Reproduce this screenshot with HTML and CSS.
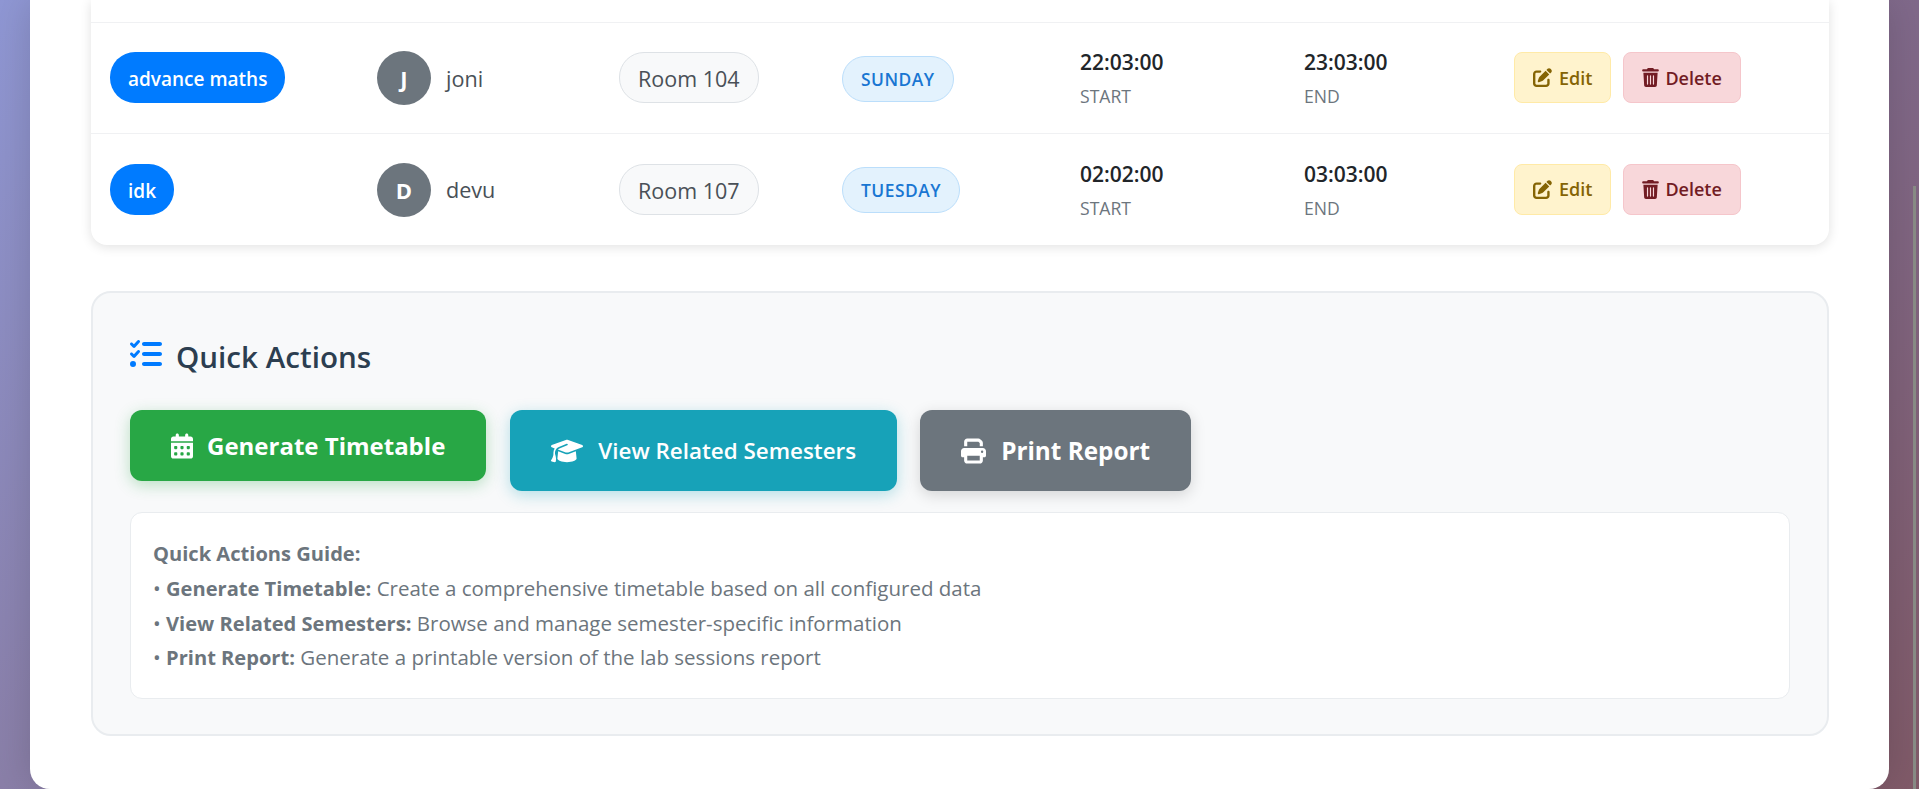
FILE: index.html
```html
<!DOCTYPE html>
<html lang="en">
<head>
    <meta charset="UTF-8">
    <title>Lab Sessions</title>
    <link rel="stylesheet" href="styles.css">
</head>
<body>
    <div class="scroll-thumb"></div>
    <div class="container">
        <div class="table-card">
            <div class="row row-cut"></div>
            <div class="row">
                <div class="cell col-subject"><span class="subject">advance maths</span></div>
                <div class="cell col-teacher"><span class="avatar">J</span><span class="teacher">joni</span></div>
                <div class="cell col-room"><span class="room">Room 104</span></div>
                <div class="cell col-day"><span class="day">SUNDAY</span></div>
                <div class="cell col-time"><div class="time">22:03:00</div><div class="time-label">START</div></div>
                <div class="cell col-time"><div class="time">23:03:00</div><div class="time-label">END</div></div>
                <div class="cell col-actions">
                    <a class="btn-small btn-edit"><svg class="ico-edit" viewBox="0 0 512 512"><path d="M471.6 21.7c-21.9-21.9-57.3-21.9-79.2 0L362.3 51.7l97.9 97.9 30.1-30.1c21.9-21.9 21.9-57.3 0-79.2L471.6 21.7zm-299.2 220c-6.1 6.1-10.8 13.6-13.5 21.9l-29.6 88.8c-2.9 8.6-.6 18.1 5.8 24.6s15.9 8.7 24.6 5.8l88.8-29.6c8.2-2.7 15.7-7.4 21.9-13.5L437.7 172.3 339.7 74.3 172.4 241.7zM96 64C43 64 0 107 0 160V416c0 53 43 96 96 96H352c53 0 96-43 96-96V320c0-17.7-14.3-32-32-32s-32 14.3-32 32v96c0 17.7-14.3 32-32 32H96c-17.7 0-32-14.3-32-32V160c0-17.7 14.3-32 32-32h96c17.7 0 32-14.3 32-32s-14.3-32-32-32H96z"/></svg>Edit</a>
                    <a class="btn-small btn-delete"><svg class="ico-trash" viewBox="0 0 448 512"><path d="M135.2 17.7L128 32H32C14.3 32 0 46.3 0 64S14.3 96 32 96H416c17.7 0 32-14.3 32-32s-14.3-32-32-32H320l-7.2-14.3C307.4 6.8 296.3 0 284.2 0H163.8c-12.1 0-23.2 6.8-28.6 17.7zM416 128H32L53.2 467c1.6 25.3 22.6 45 47.9 45H346.9c25.3 0 46.3-19.7 47.9-45L416 128zM144 192c8.8 0 16 7.2 16 16V432c0 8.8-7.2 16-16 16s-16-7.2-16-16V208c0-8.8 7.2-16 16-16zm80 0c8.8 0 16 7.2 16 16V432c0 8.8-7.2 16-16 16s-16-7.2-16-16V208c0-8.8 7.2-16 16-16zm80 0c8.8 0 16 7.2 16 16V432c0 8.8-7.2 16-16 16s-16-7.2-16-16V208c0-8.8 7.2-16 16-16z"/></svg>Delete</a>
                </div>
            </div>
            <div class="row">
                <div class="cell col-subject"><span class="subject">idk</span></div>
                <div class="cell col-teacher"><span class="avatar">D</span><span class="teacher">devu</span></div>
                <div class="cell col-room"><span class="room">Room 107</span></div>
                <div class="cell col-day"><span class="day">TUESDAY</span></div>
                <div class="cell col-time"><div class="time">02:02:00</div><div class="time-label">START</div></div>
                <div class="cell col-time"><div class="time">03:03:00</div><div class="time-label">END</div></div>
                <div class="cell col-actions">
                    <a class="btn-small btn-edit"><svg class="ico-edit" viewBox="0 0 512 512"><path d="M471.6 21.7c-21.9-21.9-57.3-21.9-79.2 0L362.3 51.7l97.9 97.9 30.1-30.1c21.9-21.9 21.9-57.3 0-79.2L471.6 21.7zm-299.2 220c-6.1 6.1-10.8 13.6-13.5 21.9l-29.6 88.8c-2.9 8.6-.6 18.1 5.8 24.6s15.9 8.7 24.6 5.8l88.8-29.6c8.2-2.7 15.7-7.4 21.9-13.5L437.7 172.3 339.7 74.3 172.4 241.7zM96 64C43 64 0 107 0 160V416c0 53 43 96 96 96H352c53 0 96-43 96-96V320c0-17.7-14.3-32-32-32s-32 14.3-32 32v96c0 17.7-14.3 32-32 32H96c-17.7 0-32-14.3-32-32V160c0-17.7 14.3-32 32-32h96c17.7 0 32-14.3 32-32s-14.3-32-32-32H96z"/></svg>Edit</a>
                    <a class="btn-small btn-delete"><svg class="ico-trash" viewBox="0 0 448 512"><path d="M135.2 17.7L128 32H32C14.3 32 0 46.3 0 64S14.3 96 32 96H416c17.7 0 32-14.3 32-32s-14.3-32-32-32H320l-7.2-14.3C307.4 6.8 296.3 0 284.2 0H163.8c-12.1 0-23.2 6.8-28.6 17.7zM416 128H32L53.2 467c1.6 25.3 22.6 45 47.9 45H346.9c25.3 0 46.3-19.7 47.9-45L416 128zM144 192c8.8 0 16 7.2 16 16V432c0 8.8-7.2 16-16 16s-16-7.2-16-16V208c0-8.8 7.2-16 16-16zm80 0c8.8 0 16 7.2 16 16V432c0 8.8-7.2 16-16 16s-16-7.2-16-16V208c0-8.8 7.2-16 16-16zm80 0c8.8 0 16 7.2 16 16V432c0 8.8-7.2 16-16 16s-16-7.2-16-16V208c0-8.8 7.2-16 16-16z"/></svg>Delete</a>
                </div>
            </div>
        </div>

        <div class="quick-panel">
            <h3 class="quick-title">
                <svg class="ico-tasks" viewBox="0 0 512 512"><path d="M152.1 38.2c9.9 8.9 10.7 24 1.8 33.9l-72 80c-4.4 4.9-10.6 7.8-17.2 7.9s-12.9-2.4-17.6-7L7 113C-2.3 103.6-2.3 88.4 7 79s24.6-9.4 33.9 0l22.1 22.1 55.1-61.2c8.9-9.9 24-10.7 33.9-1.8zm0 160c9.9 8.9 10.7 24 1.8 33.9l-72 80c-4.4 4.9-10.6 7.8-17.2 7.9s-12.9-2.4-17.6-7L7 273c-9.4-9.4-9.4-24.6 0-33.900s24.6-9.4 33.900 0l22.100 22.100 55.100-61.200c8.900-9.900 24-10.700 33.900-1.800zM192 96c0-17.700 14.300-32 32-32H480c17.700 0 32 14.300 32 32s-14.300 32-32 32H224c-17.700 0-32-14.300-32-32zm0 160c0-17.700 14.300-32 32-32H480c17.700 0 32 14.300 32 32s-14.300 32-32 32H224c-17.700 0-32-14.300-32-32zm0 160c0-17.700 14.300-32 32-32H480c17.700 0 32 14.300 32 32s-14.300 32-32 32H224c-17.700 0-32-14.300-32-32zM48 368a48 48 0 1 1 0 96 48 48 0 1 1 0-96z"/></svg>
                Quick Actions
            </h3>
            <div class="quick-buttons">
                <a class="btn-big btn-green"><svg class="ico-cal" viewBox="0 0 448 512"><path d="M128 0c17.7 0 32 14.3 32 32V64H288V32c0-17.7 14.3-32 32-32s32 14.3 32 32V64h48c26.5 0 48 21.500 48 48v48H0V112C0 85.500 21.500 64 48 64H96V32c0-17.7 14.3-32 32-32zM0 192H448V464c0 26.500-21.500 48-48 48H48c-26.500 0-48-21.500-48-48V192zm64 80v32c0 8.800 7.200 16 16 16h32c8.800 0 16-7.200 16-16V272c0-8.800-7.200-16-16-16H80c-8.800 0-16 7.200-16 16zm128 0v32c0 8.800 7.200 16 16 16h32c8.800 0 16-7.200 16-16V272c0-8.800-7.200-16-16-16H208c-8.800 0-16 7.200-16 16zm144-16c-8.800 0-16 7.200-16 16v32c0 8.800 7.200 16 16 16h32c8.800 0 16-7.200 16-16V272c0-8.800-7.200-16-16-16H336zM64 400v32c0 8.800 7.200 16 16 16h32c8.800 0 16-7.200 16-16V400c0-8.800-7.200-16-16-16H80c-8.800 0-16 7.200-16 16zm144-16c-8.800 0-16 7.200-16 16v32c0 8.800 7.200 16 16 16h32c8.800 0 16-7.200 16-16V400c0-8.800-7.200-16-16-16H208zm112 16v32c0 8.800 7.200 16 16 16h32c8.800 0 16-7.200 16-16V400c0-8.800-7.200-16-16-16H336c-8.800 0-16 7.200-16 16z"/></svg>Generate Timetable</a>
                <a class="btn-big btn-teal"><svg class="ico-grad" viewBox="0 0 640 512"><path d="M320 32c-8.100 0-16.100 1.400-23.700 4.100L15.800 137.400C6.300 140.900 0 149.900 0 160s6.300 19.100 15.800 22.600l57.900 20.900C57.300 229.300 48 259.800 48 291.900V320c0 28.400-10.800 57.700-22.300 80.800c-6.500 13-13.900 25.800-22.500 37.600C0 442.700-.9 448.300 .9 453.400s6 8.900 11.200 10.200l64 16c4.200 1.100 8.700 .3 12.400-2s6.300-6.100 7.100-10.400c8.600-42.800 4.300-81.200-2.100-108.700C90.300 344.300 86 329.800 80 316.500V291.900c0-30.200 10.200-58.700 27.900-81.500c12.900-15.500 29.600-28 49.200-35.700l157-61.700c8.200-3.200 17.500 .8 20.700 9s-.8 17.500-9 20.700l-157 61.700c-12.400 4.900-23.300 12.400-32.200 21.600l159.600 57.600c7.600 2.700 15.600 4.100 23.700 4.100s16.100-1.400 23.700-4.100L624.200 182.600c9.500-3.400 15.800-12.500 15.800-22.600s-6.300-19.100-15.800-22.600L343.700 36.100C336.100 33.400 328.100 32 320 32zM128 408c0 35.300 86 72 192 72s192-36.700 192-72L496.700 262.600 354.500 314c-11.100 4-22.800 6-34.500 6s-23.500-2-34.500-6L143.300 262.600 128 408z"/></svg>View Related Semesters</a>
                <a class="btn-big btn-gray"><svg class="ico-print" viewBox="0 0 512 512"><path d="M128 0C92.700 0 64 28.700 64 64v96h64V64H354.700L384 93.300V160h64V93.300c0-17-6.700-33.300-18.700-45.300L400 18.700C388 6.700 371.700 0 354.700 0H128zM384 352v32 64H128V384 368 352H384zm64 32h32c17.700 0 32-14.300 32-32V256c0-35.300-28.700-64-64-64H64c-35.300 0-64 28.700-64 64v96c0 17.700 14.300 32 32 32H64v64c0 35.300 28.700 64 64 64H384c35.300 0 64-28.700 64-64V384zM432 248a24 24 0 1 1 0 48 24 24 0 1 1 0-48z"/></svg>Print Report</a>
            </div>
            <div class="guide">
                <strong>Quick Actions Guide:</strong><br>
                • <strong>Generate Timetable:</strong> Create a comprehensive timetable based on all configured data<br>
                • <strong>View Related Semesters:</strong> Browse and manage semester-specific information<br>
                • <strong>Print Report:</strong> Generate a printable version of the lab sessions report
            </div>
        </div>
    </div>
</body>
</html>
```

FILE: styles.css
```css
body {
    margin: 0;
    height: 789px;
    overflow: hidden;
    font-family: "Open Sans", "Noto Sans", sans-serif;
    background: linear-gradient(135deg, #8f97d4 0%, #8a7fa8 29%, #80698a 71%, #805a68 100%);
}
.scroll-thumb {
    position: absolute;
    top: 186px;
    right: 3px;
    width: 3px;
    height: 603px;
    background-color: #878a84;
}
.container {
    margin: 0 30px;
    height: 789px;
    box-sizing: border-box;
    background-color: #fff;
    border-radius: 0 0 20px 20px;
    box-shadow: 0 0 40px rgba(0, 0, 0, 0.15);
    padding: 0 60px 0 61px;
}
.table-card {
    height: 245px;
    box-sizing: border-box;
    border-radius: 0 0 16px 16px;
    background-color: #fff;
    box-shadow: 0 2px 12px rgba(0, 0, 0, 0.12);
}
.row {
    display: flex;
    align-items: center;
    height: 111px;
    box-sizing: border-box;
    border-bottom: 1px solid #f0f1f3;
    padding-left: 19px;
}
.row:last-child {
    border-bottom: none;
}
.row-cut {
    height: 23px;
}
.cell {
    display: flex;
    align-items: center;
    flex: none;
}
.col-subject { width: 267px; }
.col-teacher { width: 242px; }
.col-room { width: 223px; }
.col-day { width: 238px; }
.col-time { width: 224px; display: block; }
.col-time + .col-time { width: 210px; }
.col-actions { gap: 12px; }

.subject {
    background-color: #007bff;
    color: #fff;
    border-radius: 25px;
    padding: 0 18px;
    height: 51px;
    line-height: 54px;
    font-size: 19px;
    font-weight: 600;
    margin-bottom: 1px;
}
.avatar {
    width: 54px;
    height: 54px;
    border-radius: 50%;
    background-color: #6c757d;
    color: #fff;
    font-size: 22px;
    font-weight: 700;
    display: flex;
    align-items: center;
    justify-content: center;
    margin-right: 15px;
}
.teacher {
    font-size: 21.6px;
    color: #495057;
}
.room {
    background-color: #f8f9fa;
    border: 1px solid #dee2e6;
    border-radius: 25px;
    color: #495057;
    font-size: 21.5px;
    font-weight: 500;
    padding: 0 18px;
    height: 49px;
    line-height: 51px;
    margin-bottom: 1px;
}
.day {
    background-color: #e3f2fd;
    border: 1px solid #bbdefb;
    border-radius: 23px;
    color: #1976d2;
    font-size: 17.4px;
    font-weight: 600;
    letter-spacing: 0.5px;
    padding: 0 18px;
    height: 44px;
    line-height: 44px;
    margin-top: 1px;
}
.time {
    font-size: 21px;
    font-weight: 600;
    color: #212529;
    margin-bottom: 8px;
}
.time-label {
    font-size: 17.6px;
    color: #6c757d;
}
.btn-small {
    display: flex;
    align-items: center;
    box-sizing: border-box;
    height: 51px;
    padding: 0 18px;
    border-radius: 8px;
    font-size: 18px;
    font-weight: 600;
    margin-bottom: 1px;
}
.btn-small svg {
    width: 19px;
    height: 19px;
    margin-right: 7px;
    fill: currentColor;
}
.btn-small .ico-trash {
    width: 17px;
    margin-right: 6px;
}
.btn-edit {
    background-color: #fff3cd;
    border: 1px solid #ffeaa7;
    color: #856404;
}
.btn-delete {
    background-color: #f8d7da;
    border: 1px solid #f5c6cb;
    color: #721c24;
}

.quick-panel {
    margin-top: 46px;
    height: 445px;
    box-sizing: border-box;
    background-color: #f8f9fa;
    border: 2px solid #e9ecef;
    border-radius: 20px;
    padding: 43px 37px 37px;
}
.quick-title {
    display: flex;
    align-items: center;
    margin: 0 0 33px;
    font-size: 29.6px;
    font-weight: 600;
    color: #2c3e50;
}
.ico-tasks {
    width: 32px;
    height: 32px;
    fill: #007bff;
    margin: 0 14px 5px 0;
}
.quick-buttons {
    display: flex;
    align-items: flex-start;
    gap: 23px;
    margin-bottom: 21px;
}
.btn-big {
    display: flex;
    align-items: center;
    color: #fff;
    border-radius: 12px;
    font-size: 24px;
    font-weight: 700;
    padding: 0 41px;
    height: 81px;
    box-shadow: 0 4px 15px rgba(0, 0, 0, 0.15);
}
.btn-big svg {
    fill: #fff;
    width: 22px;
    height: 26px;
    margin-right: 14px;
}
.btn-green {
    background-color: #28a745;
    height: 71px;
    margin-right: 1px;
    box-shadow: 0 4px 15px rgba(40, 167, 69, 0.3);
}
.btn-teal {
    background-color: #17a2b8;
    font-size: 22.4px;
    font-weight: 600;
    box-shadow: 0 4px 15px rgba(23, 162, 184, 0.3);
}
.btn-big .ico-grad {
    width: 32px;
    margin-right: 15px;
}
.btn-gray {
    background-color: #6c757d;
    font-size: 24.3px;
}
.btn-big .ico-print {
    width: 25px;
    margin-right: 15px;
}
.guide {
    background-color: #fff;
    border: 1px solid #e9ecef;
    border-radius: 12px;
    padding: 23px 22px 23px;
    color: #6c757d;
    font-size: 20.5px;
    line-height: 34.8px;
}
.guide strong {
    font-size: 20.1px;
    line-height: 1;
}
```
